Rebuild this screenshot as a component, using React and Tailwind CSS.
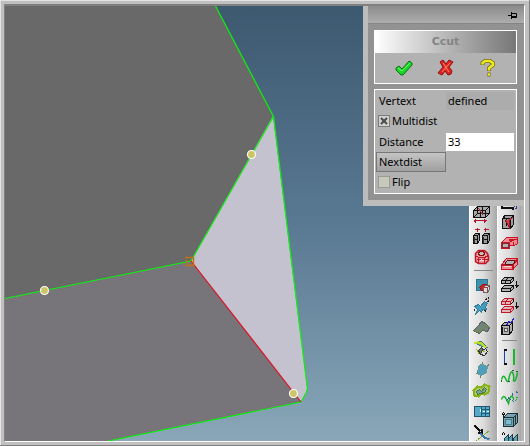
import React, { useState } from "react";

const Model = () => (
  <svg
    viewBox="0 0 519 435"
    preserveAspectRatio="xMinYMin slice"
    className="absolute inset-0 w-full h-full"
    aria-hidden="true"
  >
    {/* Faces */}
    <path d="M0 0H211L268 110L186 255L0 292Z" fill="#696969" />
    <path d="M0 292L186 255L296 396L104 435H0Z" fill="#78757a" />
    <path d="M268 110L302 382L301 386L296 396L186 255Z" fill="#c3c2ce" />

    {/* Edges */}
    <g fill="none" strokeWidth="1.2">
      <path d="M210.5 0L268.5 110.5L302.5 383L301 387L296 396L103 435" stroke="#0cf00c" />
      <path d="M268.5 110.5L186 255L0 292.5" stroke="#0cf00c" />
      <path d="M186 255L296 396" stroke="#e01020" />
    </g>
    <path d="M180 251.5H188.5V259.5H181.5V254" fill="none" stroke="#c86e14" strokeWidth="1.5" />

    {/* Drag handles */}
    <g fill="#cdc465" stroke="#fff" strokeWidth="1.2">
      <circle cx="39.5" cy="284.5" r="4" />
      <circle cx="246.5" cy="148.5" r="4" />
      <circle cx="288.5" cy="387.5" r="4" />
    </g>
  </svg>
);

const Icon = ({ children }) => (
  <svg
    viewBox="0 0 20 20"
    className="w-5 h-5"
    fill="none"
    stroke="#111"
    strokeWidth="1"
    shapeRendering="crispEdges"
  >
    <g transform="translate(0.5 0.5)">{children}</g>
  </svg>
);

const leftTools = [
  {
    name: "Box size",
    icon: (
      <Icon>
        <path d="M1 5L5 1H17V8L13 12H1Z" fill="#a8a8a8" />
        <path d="M1 5H13V12M13 5L17 1M5 1V8L1 12M5 8H17M8 5V12M10 1V8" />
        <path d="M6 3L11 10" stroke="#a03038" />
        <path d="M1 15H14M3 13V17M12 13V17M2 14V16M13 14V16" stroke="#b01830" />
      </Icon>
    ),
  },
  {
    name: "Split boxes",
    icon: (
      <Icon>
        <path d="M2 3H7M11 3H16M5 1V5M13 1V5" stroke="#b01830" />
        <path d="M1 9L3 7H7V14L5 17H1ZM10 9L12 7H17V14L15 17H10Z" fill="#9c9c9c" />
        <path d="M1 9H5V17M5 9L7 7M10 9H15V17M15 9L17 7M1 13H5M10 13H15" />
        <path d="M2 10V16M11 10V16" stroke="#333" />
      </Icon>
    ),
  },
  {
    name: "Ring",
    icon: (
      <Icon>
        <path
          d="M3 6L6 3H12L15 6L16 9V13L13 16H6L3 14Z"
          fill="#e9989c"
          stroke="#c01828"
          shapeRendering="auto"
          strokeWidth="1.5"
        />
        <path d="M3 8L6 10H12L16 8M6 10V15M12 10V15M4 12H15" stroke="#c01828" />
        <ellipse cx="9" cy="6" rx="3" ry="2" fill="#c4bcbc" stroke="#811" />
        <path d="M7 13H11M9 11V12" stroke="#f2dede" />
      </Icon>
    ),
  },
  null,
  {
    name: "Surface with body",
    icon: (
      <Icon>
        <rect x="4" y="3" width="11" height="11" fill="#3e91ad" stroke="#287894" />
        <path d="M7 11L10 8H14L15 11L12 14H9Z" fill="#d32020" stroke="#a00c18" />
        <path d="M11 11L13 9H17V13L15 16H11Z" fill="#ddd" stroke="#666" />
        <path d="M11 11H15L17 9M15 11V16" stroke="#944" />
      </Icon>
    ),
  },
  {
    name: "Extend surface",
    icon: (
      <Icon>
        <path d="M2 9L6 7L8 9L12 4L15 6L13 9L14 12L10 12L9 15L7 13L3 17L5 12Z" fill="#429dbe" stroke="#347e99" />
        <path d="M13 2L17 0M15 4L17 3M12 13L14 14M2 11V13" stroke="#222" strokeDasharray="2 1" />
      </Icon>
    ),
  },
  {
    name: "Blend surface",
    icon: (
      <Icon>
        <path d="M1 12L6 7L9 3L13 5L17 9L15 13L10 12L7 15Z" fill="#74837c" stroke="#5a645c" />
        <path d="M2 12L5 14L7 12L10 11L13 8L16 9" stroke="#6c8e3a" />
      </Icon>
    ),
  },
  {
    name: "Swept surface",
    icon: (
      <Icon>
        <path d="M2 4Q7 0 11 4L15 8L9 7Q6 4 2 4Z" fill="#62aaaa" stroke="#407878" />
        <path d="M2 4Q7 1 11 6L14 8" stroke="#c2de20" strokeWidth="2" />
        <path d="M6 11L9 8L11 11L8 15Z" fill="#777" stroke="#333" />
        <path d="M9 12L13 9L15 12L12 16L8 15Z" fill="#ddd" stroke="#333" />
        <path d="M4 10L7 15M11 11L12 13" stroke="#8eb812" />
      </Icon>
    ),
  },
  {
    name: "Patch",
    icon: (
      <Icon>
        <path d="M10 3L12 5L15 6L14 12L11 14L8 15L5 13L6 6Z" fill="#4d9fba" stroke="#6c9696" />
        <path d="M10 1V3M3 14L5 12M8 15V17M15 6L16 4" stroke="#6b7f50" />
      </Icon>
    ),
  },
  {
    name: "Trim patch",
    icon: (
      <Icon>
        <path d="M1 9L5 5L9 6L12 3L17 5L16 11L12 13L9 12L6 15L2 14Z" fill="#b3c672" stroke="#86b418" strokeWidth="2" />
        <path d="M4 10L7 8L9 10L12 6L14 8L12 11L8 12L5 13Z" fill="#66aca4" stroke="#5d7430" />
      </Icon>
    ),
  },
  {
    name: "Surface grid",
    icon: (
      <Icon>
        <path d="M2 4H17V14H2Z" fill="#58a9c6" stroke="#20576e" />
        <path d="M9 4V14M13 4V14M9 7H17M9 11H17" stroke="#1c5c7a" />
        <path d="M8 6V9M10 9H12M14 9H16" stroke="#d4f4ff" />
      </Icon>
    ),
  },
  {
    name: "Trim curve",
    icon: (
      <Icon>
        <path d="M2 2L8 8M5 9H9V5" strokeWidth="2" />
        <path d="M8 14L17 7" stroke="#70ae30" />
        <path d="M8 10L12 14L17 16" stroke="#3c76a5" strokeWidth="2" />
        <path d="M3 18L9 13" stroke="#77a72c" strokeDasharray="2 1" />
      </Icon>
    ),
  },
];

const rightTools = [
  {
    name: "Chamfer",
    icon: (
      <Icon>
        <path d="M1 14V16H12V18" strokeWidth="2" />
        <path d="M13 14L17 19M16 14V17" stroke="#3040a0" strokeDasharray="2 1" />
      </Icon>
    ),
  },
  {
    name: "Section",
    icon: (
      <Icon>
        <path d="M2 6L4 3H13V12L10 16H2Z" fill="#9e9e9e" />
        <path d="M2 6H10V16M10 6L13 3M6 6V13M4 3V6" />
        <path d="M5 8L9 15V8L12 5" fill="#c84450" stroke="#a41020" />
      </Icon>
    ),
  },
  {
    name: "Slab",
    icon: (
      <Icon>
        <path d="M1 9L6 4H17V10L14 12H9V15H1Z" fill="#ec8c90" stroke="#c81424" />
        <path d="M1 9H9V15M9 9L13 6H17M13 12V8" stroke="#c81424" />
        <path d="M2 10H8V14H2Z" fill="#b8b0b0" stroke="#7a3038" />
        <path d="M8 6H13" stroke="#c81424" strokeWidth="2" />
      </Icon>
    ),
  },
  {
    name: "Slab pocket",
    icon: (
      <Icon>
        <path d="M1 10L6 4H17V10L12 15H1Z" fill="#ec8c90" stroke="#c81424" />
        <path d="M1 10H12V15M12 10L17 5" stroke="#c81424" strokeWidth="2" />
        <path d="M5 10V8L7 6H14V8L12 10Z" fill="#b8b0b0" stroke="#521820" />
        <path d="M3 12H10" stroke="#e8d8d8" />
      </Icon>
    ),
  },
  {
    name: "Move down",
    icon: (
      <Icon>
        <path d="M1 5L4 2H13V5L10 8H1ZM1 13L4 10H13V13L10 16H1Z" fill="#b0b0b0" />
        <path d="M1 5H10V8M10 5L13 2M5 8V5L8 2M1 13H10V16M10 13L13 10" />
        <path d="M16 5V12M14 10H18M15 11H17" />
      </Icon>
    ),
  },
  {
    name: "Move part down",
    icon: (
      <Icon>
        <path d="M1 5L4 2H13V5L10 8H1ZM1 13L4 10H13V13L10 16H1Z" fill="#e4b4b8" stroke="#c01828" />
        <path d="M1 5H10V8M10 5L13 2M5 8V5L8 2M1 13H10V16M10 13L13 10" stroke="#c01828" />
        <path d="M10 8L13 5V2" />
        <path d="M16 5V12M14 10H18M15 11H17" />
      </Icon>
    ),
  },
  {
    name: "Shell",
    icon: (
      <Icon>
        <path d="M1 8L4 5H12V13L9 17H1Z" fill="#b0b0b0" />
        <path d="M1 8H9V17M9 8L12 5M2 9V16" />
        <path d="M4 11H7V14H4Z" fill="#ddd" stroke="#555" />
        <path d="M6 8L8 4L11 5L13 1" stroke="#2428c8" />
      </Icon>
    ),
  },
  null,
  {
    name: "Parallel lines",
    icon: (
      <Icon>
        <path d="M4 3V17" stroke="#2040b0" />
        <path d="M3 3H6M3 17H6" strokeWidth="2" />
        <path d="M13 2V18" stroke="#18b828" strokeWidth="2" />
      </Icon>
    ),
  },
  {
    name: "Spline",
    icon: (
      <Icon>
        <path
          d="M1 12Q3 6 5 11T8 13Q10 2 12 5T13 13Q15 16 17 5"
          stroke="#18b02c"
          strokeWidth="1.5"
          shapeRendering="auto"
        />
        <path d="M1 12V14M7 14H9M11 3H13M15 4H17" stroke="#286038" />
      </Icon>
    ),
  },
  {
    name: "Edit spline",
    icon: (
      <Icon>
        <path d="M1 11Q3 5 6 11L8 15Q10 4 13 10" stroke="#18b02c" strokeWidth="1.5" shapeRendering="auto" />
        <path d="M13 10Q15 16 17 7" stroke="#18a82c" strokeDasharray="2 1" />
        <path d="M5 13L8 10M8 9L11 12M12 4V7M16 3L17 5M12 12L14 14" stroke="#2868a4" />
      </Icon>
    ),
  },
  {
    name: "Surface solid",
    icon: (
      <Icon>
        <path d="M3 8L7 4H17V13L13 17H3Z" fill="#7aa2ac" stroke="#19323b" />
        <path d="M3 8H13V17M13 8L17 4M15 6V15" stroke="#19323b" />
        <path d="M5 10H11V15H5Z" fill="#7cbcd0" stroke="#4b7b8c" />
        <path d="M1 6L3 3L5 6M3 4V7" />
      </Icon>
    ),
  },
  {
    name: "Extrude surface",
    icon: (
      <Icon>
        <path d="M4 8L8 4V11L4 14ZM8 8L12 4V11L8 14ZM13 8L17 4V14H13Z" fill="#5fa2b4" stroke="#173c46" />
        <path d="M1 5L3 2L5 5" />
      </Icon>
    ),
  },
];

const Toolbar = ({ label, tools, className }) => (
  <div
    role="toolbar"
    aria-label={label}
    className={`flex flex-col border-l border-white bg-linear-to-r from-[#f0f0f0] via-[#dcdcdc] to-[#a8a8a8] ${className}`}
  >
    {tools.map((tool, i) =>
      tool ? (
        <button
          key={tool.name}
          type="button"
          title={tool.name}
          aria-label={tool.name}
          className="h-[21px] shrink-0 pl-0.5 flex items-start"
        >
          {tool.icon}
        </button>
      ) : (
        <div key={i} className="h-2 shrink-0 flex items-start pt-0.5 px-1">
          <div className="h-px w-full bg-[#888]" />
        </div>
      )
    )}
  </div>
);

const CheckRow = ({ label, checked, onChange }) => (
  <label className="col-span-2 h-5 flex items-center gap-0.5 pl-0.5">
    <span className="relative w-3 h-3">
      <input
        type="checkbox"
        checked={checked}
        onChange={(e) => onChange(e.target.checked)}
        className="block appearance-none w-3 h-3 border border-[#9a9a90] bg-[#c8c8bc] checked:border-[#7c7c7c] checked:bg-[#d0d0cc]"
      />
      {checked && (
        <svg viewBox="0 0 12 12" className="absolute inset-0 pointer-events-none">
          <path d="M3 3L9 9M9 3L3 9" stroke="#4b4b4b" strokeWidth="2" />
        </svg>
      )}
    </span>
    {label}
  </label>
);

const CutPanel = () => {
  const [multidist, setMultidist] = useState(true);
  const [flip, setFlip] = useState(false);
  const [distance, setDistance] = useState("33");

  return (
    <section className="w-full shrink-0 border-l-[5px] border-b-[6px] border-[#bcbcbc] bg-[#929292]">
      <div className="h-[18px] flex items-center justify-end pr-1.5 bg-linear-to-b from-[#8c8c8c] to-[#aeaeae] border-b border-[#858585]">
        <button type="button" aria-label="Pin panel">
          <svg viewBox="0 0 10 8" className="w-[10px] h-2" fill="none" stroke="#000">
            <path d="M0 4.5H3M3.5 1V8M4 2.5H8.5V6.5H4M4 5.5H8" />
          </svg>
        </button>
      </div>

      <div className="flex flex-col gap-[5px] pt-1.5 pb-1.5 pl-1.5 pr-[7px]">
        <div className="border border-white bg-[#b2b2b2]">
          <h1 className="h-[22px] flex items-center justify-center bg-linear-to-r from-white to-[#777] font-['DejaVu_Sans',sans-serif] text-[11px] font-bold text-[#848484]">
            Ccut
          </h1>
          <div className="h-[30px] flex items-center justify-center gap-6">
            <button type="button" aria-label="OK">
              <svg viewBox="0 0 18 18" className="w-[18px] h-[18px]">
                <path d="M1 9L4 7L7 10L14 2L17 4V6L8 16H6L1 11Z" fill="#18d824" stroke="#126d18" />
                <path d="M3 9L7 12L15 4" fill="none" stroke="#78f080" />
              </svg>
            </button>
            <button type="button" aria-label="Cancel">
              <svg viewBox="0 0 18 18" className="w-[18px] h-[18px]">
                <path
                  d="M3 3L6 1L9 5L12 1L16 3L12 8L15 12L14 15L11 16L8 12L5 16L1 14L6 8Z"
                  fill="#e42020"
                  stroke="#8c1010"
                />
                <path d="M6 4L12 13M13 4L5 13" fill="none" stroke="#ff9068" />
              </svg>
            </button>
            <button type="button" aria-label="Help">
              <svg viewBox="0 0 18 18" className="w-[18px] h-[18px]" fill="none">
                <path d="M3.5 6V4L6 2H11L14 4V6L10 9V12M8.5 15.5H11.5" stroke="#706c10" strokeWidth="4" />
                <path d="M3.5 5.500V4L6 2H11L14 4V6L10 9V11.500M9 15.500H11" stroke="#f0e820" strokeWidth="2.500" />
              </svg>
            </button>
          </div>
        </div>

        <div className="grid grid-cols-[70px_1fr] items-center border border-white bg-[#b2b2b2] pl-px pr-0.5 py-px">
          <span className="h-5 flex items-center pl-[3px]">Vertext</span>
          <span className="h-[18px] flex items-center pl-0.5 bg-[#acacac]">defined</span>

          <CheckRow label="Multidist" checked={multidist} onChange={setMultidist} />

          <label htmlFor="distance" className="h-[21px] flex items-center pl-[3px]">
            Distance
          </label>
          <input
            id="distance"
            type="text"
            value={distance}
            onChange={(e) => setDistance(e.target.value)}
            className="w-full h-[18px] pl-0.5 bg-white outline-none"
          />

          <button
            type="button"
            className="h-5 pl-0.5 text-left border border-[#777] bg-linear-to-b from-[#c4c4c4] to-[#a0a0a0]"
          >
            Nextdist
          </button>
          <span />

          <CheckRow label="Flip" checked={flip} onChange={setFlip} />
        </div>
      </div>
    </section>
  );
};

const App = () => {
  return (
    <div className="h-screen flex flex-col border-r border-b border-[#808080] bg-[#c0c0c0] font-['Noto_Sans',sans-serif] text-[11px] leading-4 text-black">
      <div className="flex-1 min-h-0 flex flex-col border-l border-t border-[#e4e4e4] pt-[3px] pl-[3px] pr-1 pb-[3px]">
        <main className="relative flex-1 min-h-0 overflow-hidden border-t-2 border-l border-t-[#808080] border-l-[#808080] border-r border-b border-r-white border-b-white bg-linear-to-b from-[#3d5970] via-[#597992] to-[#8aa7b9]">
          <Model />
          <div className="absolute inset-y-0 right-0 w-[161px] flex flex-col">
            <CutPanel />
            <div className="flex-1 min-h-0 overflow-hidden self-end flex items-start pr-[3px] bg-[#b4b4b4]">
              <Toolbar label="Solids" tools={leftTools} className="w-7 pb-4 -mt-px" />
              <Toolbar label="Curves" tools={rightTools} className="w-6 pb-4 -mt-[15px]" />
            </div>
          </div>
        </main>
      </div>
    </div>
  );
};

export default App;
